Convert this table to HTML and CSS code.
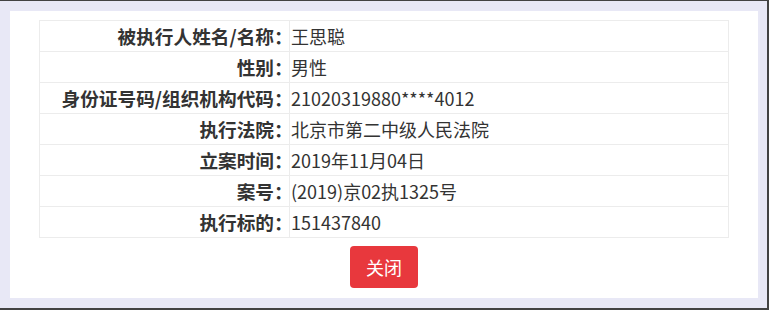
FILE: index.html
```html
<!DOCTYPE html>
<html lang="zh-CN">
<head>
<meta charset="utf-8">
<title>被执行人信息</title>
<link rel="stylesheet" href="styles.css">
</head>
<body>
<div class="frame">
  <div class="panel">
    <table class="info">
      <colgroup><col class="col-label"><col class="col-value"></colgroup>
      <tbody>
        <tr><th>被执行人姓名/名称<span class="colon">：</span></th><td>王思聪</td></tr>
        <tr><th>性别<span class="colon">：</span></th><td>男性</td></tr>
        <tr><th>身份证号码/组织机构代码<span class="colon">：</span></th><td>21020319880****4012</td></tr>
        <tr><th>执行法院<span class="colon">：</span></th><td>北京市第二中级人民法院</td></tr>
        <tr><th>立案时间<span class="colon">：</span></th><td>2019年11月04日</td></tr>
        <tr><th>案号<span class="colon">：</span></th><td>(2019)京02执1325号</td></tr>
        <tr><th>执行标的<span class="colon">：</span></th><td>151437840</td></tr>
      </tbody>
    </table>
    <div class="actions"><button class="btn-close" type="button">关闭</button></div>
  </div>
</div>
</body>
</html>
```
FILE: styles.css
```css
html, body {
  margin: 0;
  padding: 0;
}
body {
  background: #434343;
  width: 769px;
  height: 310px;
  overflow: hidden;
  font-family: "Noto Sans CJK SC", "Noto Sans", sans-serif;
  color: #333;
}
.frame {
  margin: 1px 2px 2px 0;
  height: 307px;
  box-sizing: border-box;
  padding: 10px 9px 10px 10px;
  background: #e8e8f6;
}
.panel {
  background: #fff;
  height: 287px;
  box-sizing: border-box;
  padding-top: 9px;
}
.info {
  width: 690px;
  margin: 0 auto;
  border-collapse: collapse;
  table-layout: fixed;
  font-size: 18px;
}
.col-label { width: 250px; }
.info th, .info td {
  border: 1px solid #ececec;
  height: 30px;
  padding: 0 1px;
  line-height: 30px;
  white-space: nowrap;
}
.info th {
  text-align: right;
  font-weight: bold;
  font-size: 18.67px;
  color: #333;
}
.info td {
  text-align: left;
  font-weight: normal;
}
.colon {
  letter-spacing: -4.67px;
}
.actions {
  display: flex;
  justify-content: center;
  margin-top: 8px;
}
.btn-close {
  width: 68px;
  height: 42px;
  border: 0;
  border-radius: 4px;
  background: #e8383d;
  color: #fff;
  font-family: "Noto Sans CJK SC", "Noto Sans", sans-serif;
  font-size: 18px;
  padding: 0;
}
```
